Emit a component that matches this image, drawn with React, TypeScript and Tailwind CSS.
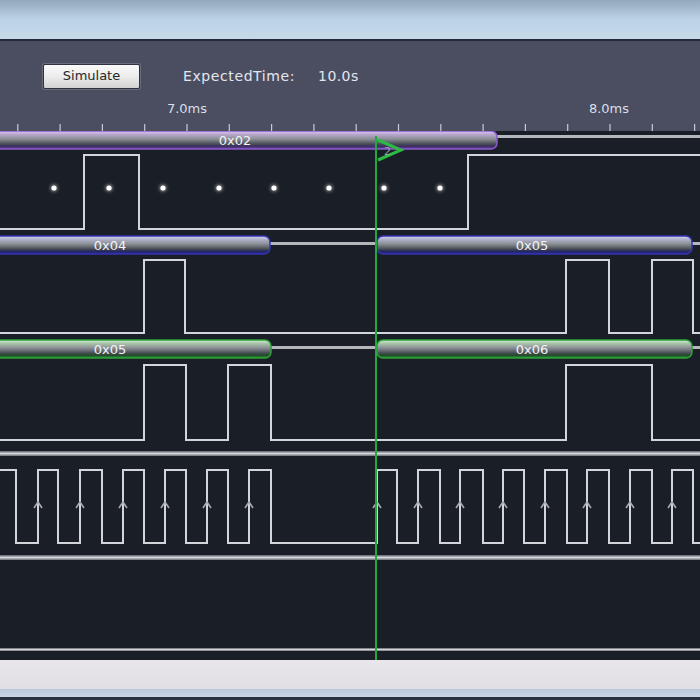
import React from "react";

type Pt = [number, number];

function square(hi: number, lo: number, startHigh: boolean, edges: number[], end = 700): string {
  let level = startHigh;
  const pts: Pt[] = [[0, level ? hi : lo]];
  for (const x of edges) {
    pts.push([x, level ? hi : lo]);
    level = !level;
    pts.push([x, level ? hi : lo]);
  }
  pts.push([end, level ? hi : lo]);
  return pts.map((p) => `${p[0]},${p[1]}`).join(" ");
}

const clockEdges = [
  16, 38, 58, 80, 102, 123, 144, 165, 186, 207, 228, 249, 271, 377, 397, 418, 440, 460, 483, 503, 524, 545, 567,
  587, 609, 630, 652, 672, 693,
];
const clockArrows = [38, 80, 123, 165, 207, 249, 377, 418, 460, 503, 545, 587, 630, 672];
const dots = [54, 109, 163, 219, 274, 329, 384, 440];

const ticks: number[] = [];
for (let i = -1; i < 18; i++) ticks.push(187 + (i - 4) * 42.3);

function Bus({
  x1,
  x2,
  y,
  h,
  grad,
  stroke,
  label,
  lx,
}: {
  x1: number;
  x2: number;
  y: number;
  h: number;
  grad: string;
  stroke: string;
  label: string;
  lx: number;
}) {
  return (
    <g>
      <rect x={x1} y={y} width={x2 - x1} height={h} rx={6} fill={`url(#${grad})`} stroke={stroke} strokeWidth={1.5} />
      <text
        x={lx}
        y={y + h / 2 + 0.5}
        textAnchor="middle"
        dominantBaseline="central"
        fontSize={13}
        fill="#f2f4f8"
        fontFamily="'DejaVu Sans', sans-serif"
      >
        {label}
      </text>
    </g>
  );
}

function Grad({ id, top, mid, dark, edge }: { id: string; top: string; mid: string; dark: string; edge: string }) {
  return (
    <linearGradient id={id} x1="0" y1="0" x2="0" y2="1">
      <stop offset="0" stopColor={top} />
      <stop offset="0.2" stopColor={mid} />
      <stop offset="0.45" stopColor="#8a8e94" />
      <stop offset="0.7" stopColor="#4e525a" />
      <stop offset="0.84" stopColor={dark} />
      <stop offset="1" stopColor={edge} />
    </linearGradient>
  );
}

export default function App() {
  return (
    <div
      className="w-[700px] h-[700px] overflow-hidden flex flex-col bg-[#1a1e26]"
      style={{ fontFamily: "'DejaVu Sans', 'Liberation Sans', sans-serif" }}
    >
      {/* window frame */}
      <div className="h-[39px] shrink-0 bg-gradient-to-b from-[#93a8ba] via-[#bcd2e6] to-[#c6d9ea]" />
      <div className="h-[2px] shrink-0 bg-[#232a3a]" />
      {/* toolbar */}
      <div className="h-[90px] shrink-0 bg-[#4a4e60] flex flex-col">
        <div className="flex items-center h-[51px] pt-[19px] pl-[43px]">
          <button className="w-[97px] h-[25px] rounded-[2px] border border-[#2e3140] bg-gradient-to-b from-[#fafafa] via-[#ececec] to-[#d2d2d2] text-[13px] text-[#25272b] shadow-[0_0_0_1px_#6a6e7c]">
            Simulate
          </button>
          <span className="ml-[43px] text-[14px] tracking-[0.6px] text-[#e4e6ee]">ExpectedTime:</span>
          <span className="ml-[23px] text-[14px] tracking-[0.4px] text-[#e4e6ee]">10.0s</span>
        </div>
        <svg width={700} height={39} viewBox="0 92 700 39" className="block">
          {ticks.map((x, i) => (
            <line key={i} x1={x} y1={124} x2={x} y2={131} stroke="#c8cad6" strokeWidth={1.2} />
          ))}
          <text x={187} y={113} textAnchor="middle" fontSize={13} fill="#dcdee8" fontFamily="'DejaVu Sans', sans-serif">
            7.0ms
          </text>
          <text x={609} y={113} textAnchor="middle" fontSize={13} fill="#dcdee8" fontFamily="'DejaVu Sans', sans-serif">
            8.0ms
          </text>
        </svg>
      </div>
      {/* waveform area */}
      <svg width={700} height={529} viewBox="0 131 700 529" className="block shrink-0">
        <defs>
          <Grad id="gp" top="#dcc8f8" mid="#b6a6cc" dark="#3a2e58" edge="#6a3ab0" />
          <Grad id="gb" top="#d4d4f6" mid="#aeb0c8" dark="#262a58" edge="#2424a0" />
          <Grad id="gg" top="#d0f0d0" mid="#a8c2aa" dark="#23462c" edge="#24962e" />
          <linearGradient id="sep" x1="0" y1="0" x2="0" y2="1">
            <stop offset="0" stopColor="#5a5e66" />
            <stop offset="0.5" stopColor="#d4d6da" />
            <stop offset="1" stopColor="#6a6e76" />
          </linearGradient>
          <filter id="glow" x="-1" y="-1" width="3" height="3">
            <feGaussianBlur stdDeviation="1.5" />
          </filter>
        </defs>
        <rect x={0} y={131} width={700} height={529} fill="#1a1e26" />

        {/* row 1 purple bus */}
        <rect x={495} y={135} width={205} height={3} fill="#b4b8bc" />
        <Bus x1={-10} x2={497} y={131} h={18} grad="gp" stroke="#8a5cc8" label="0x02" lx={235} />

        {/* row 2 */}
        <polyline points={square(155, 229, false, [84, 139, 468])} fill="none" stroke="#d2d6da" strokeWidth={2} />
        {dots.map((x) => (
          <g key={x}>
            <circle cx={x} cy={188} r={4} fill="#ffffff" opacity={0.35} filter="url(#glow)" />
            <circle cx={x} cy={188} r={2.6} fill="#ffffff" />
          </g>
        ))}

        {/* row 3 blue bus */}
        <rect x={265} y={242} width={120} height={3} fill="#b4b8bc" />
        <rect x={688} y={242} width={20} height={3} fill="#b4b8bc" />
        <Bus x1={-10} x2={270} y={236} h={18} grad="gb" stroke="#3434b0" label="0x04" lx={110} />
        <Bus x1={377} x2={692} y={236} h={18} grad="gb" stroke="#3434b0" label="0x05" lx={532} />

        {/* row 4 */}
        <polyline
          points={square(260, 333, false, [144, 185, 566, 609, 652, 693])}
          fill="none"
          stroke="#d2d6da"
          strokeWidth={2}
        />

        {/* row 5 green bus */}
        <rect x={265} y={346} width={120} height={3} fill="#b4b8bc" />
        <rect x={688} y={346} width={20} height={3} fill="#b4b8bc" />
        <Bus x1={-10} x2={271} y={340} h={18} grad="gg" stroke="#2ea238" label="0x05" lx={110} />
        <Bus x1={377} x2={692} y={340} h={18} grad="gg" stroke="#2ea238" label="0x06" lx={532} />

        {/* row 6 */}
        <polyline
          points={square(365, 440, false, [144, 186, 228, 271, 566, 652])}
          fill="none"
          stroke="#d2d6da"
          strokeWidth={2}
        />

        {/* separators */}
        <rect x={0} y={451} width={700} height={5} fill="url(#sep)" />
        <rect x={0} y={555} width={700} height={5} fill="url(#sep)" />
        <rect x={0} y={648} width={700} height={3} fill="url(#sep)" />

        {/* clock */}
        <polyline points={square(470, 543, true, clockEdges)} fill="none" stroke="#d2d6da" strokeWidth={2} />
        {clockArrows.map((x) => (
          <path
            key={x}
            d={`M${x - 4} ${508} L${x} ${502} L${x + 4} ${508}`}
            fill="none"
            stroke="#a8acb2"
            strokeWidth={1.6}
          />
        ))}

        {/* cursor */}
        <line x1={376} y1={136} x2={376} y2={660} stroke="#22a83c" strokeWidth={2} />
        <path d="M378 140 L401 150 L378 160" fill="none" stroke="#2cba44" strokeWidth={3} strokeLinejoin="miter" />
        <text
          x={384}
          y={151}
          dominantBaseline="central"
          fontSize={11}
          fill="#9aa0a8"
          fontFamily="'DejaVu Sans', sans-serif"
        >
          2
        </text>
      </svg>
      {/* status bar */}
      <div className="h-[29px] shrink-0 bg-gradient-to-b from-[#e8e6ea] to-[#e2dfe4]" />
      <div className="h-[8px] shrink-0 bg-gradient-to-b from-[#b8c6d8] to-[#c8d6e6]" />
      <div className="h-[3px] shrink-0 bg-[#2a3040]" />
    </div>
  );
}
